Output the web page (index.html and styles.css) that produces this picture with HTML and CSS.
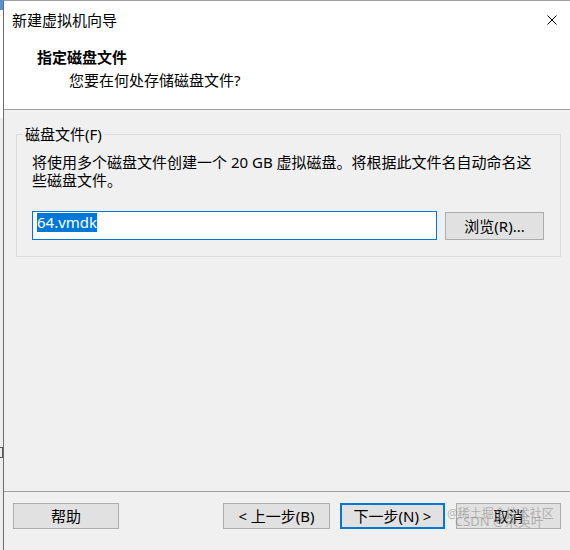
FILE: index.html
```html
<!DOCTYPE html>
<html lang="zh-CN">
<head>
<meta charset="utf-8">
<title>新建虚拟机向导</title>
<link rel="stylesheet" href="styles.css">
</head>
<body>
<div class="screen">
  <div class="strip">
    <div class="strip-blue"></div>
    <div class="strip-white"></div>
    <div class="strip-gray"><div class="strip-box"></div></div>
  </div>
  <div class="window">
    <header class="header">
      <div class="titlebar">
        <span class="title">新建虚拟机向导</span>
        <svg class="close" width="10" height="10" viewBox="0 0 10 10" aria-label="关闭">
          <path d="M0.5 0.5 L9.5 9.5 M9.5 0.5 L0.5 9.5" stroke="#000" stroke-width="1" fill="none"/>
        </svg>
      </div>
      <div class="heading">指定磁盘文件</div>
      <div class="sub">您要在何处存储磁盘文件?</div>
    </header>
    <main class="content">
      <fieldset class="group">
        <legend class="legend">磁盘文件(F)</legend>
        <div class="group-body">
          <p class="desc">将使用多个磁盘文件创建一个 20 GB 虚拟磁盘。将根据此文件名自动命名这<br>些磁盘文件。</p>
          <div class="row">
            <div class="field"><span class="selected">64.vmdk</span></div>
            <button class="btn browse">浏览(R)...</button>
          </div>
        </div>
      </fieldset>
    </main>
    <footer class="footer">
      <button class="btn help">帮助</button>
      <button class="btn back">&lt; 上一步(B)</button>
      <button class="btn next">下一步(N) &gt;</button>
      <button class="btn cancel">取消</button>
      <span class="wm wm1">@稀土掘金技术社区</span>
      <span class="wm wm2">CSDN @朱英叶</span>
    </footer>
  </div>
</div>
</body>
</html>
```

FILE: styles.css
```css
html, body {
  margin: 0;
  padding: 0;
}
body {
  width: 570px;
  height: 550px;
  overflow: hidden;
  background: #f0f0f0;
  font-family: "Noto Sans", "Noto Sans CJK SC", sans-serif;
  font-size: 15px;
  color: #000;
}
.screen {
  display: flex;
  height: 550px;
}
.strip {
  width: 3px;
  display: flex;
  flex-direction: column;
}
.strip-blue {
  height: 10px;
  background: #5b8fd0;
}
.strip-white {
  height: 108px;
  background: #ffffff;
}
.strip-gray {
  flex: 1;
  background: #ececec;
  padding-top: 329px;
}
.strip-box {
  height: 9px;
  width: 2px;
  border: 1px solid #555;
  border-left: none;
}
.window {
  flex: 1;
  display: flex;
  flex-direction: column;
  border-left: 1px solid #6d6d6d;
  border-top: 1px solid #a0a0a0;
  background: #f0f0f0;
  min-width: 0;
}
.header {
  background: #fff;
  height: 108px;
  border-bottom: 1px solid #a0a0a0;
}
.titlebar {
  height: 37px;
  display: flex;
  align-items: center;
  justify-content: space-between;
  padding: 0 13px 0 8px;
}
.title {
  line-height: 20px;
}
.close {
  display: block;
}
.heading {
  margin: 8px 0 0 33px;
  font-weight: 700;
  line-height: 22px;
}
.sub {
  margin: 1px 0 0 65px;
  line-height: 22px;
}
.content {
  flex: 1;
  padding: 14px 9px 0 12px;
}
.group {
  margin: 0;
  border: 1px solid #dcdcdc;
  padding: 0 0 0 6px;
  min-width: 0;
}
.legend {
  padding: 0 2px;
  line-height: 20px;
}
.group-body {
  padding: 9px 16px 16px 9px;
}
.desc {
  margin: 0;
  line-height: 18px;
}
.row {
  display: flex;
  align-items: flex-start;
  gap: 8px;
  margin-top: 22px;
}
.field {
  flex: 1;
  height: 29px;
  box-sizing: border-box;
  border: 1px solid #0078d7;
  background: #fff;
  padding: 0 0 0 4px;
}
.selected {
  display: inline-block;
  background: #0078d7;
  color: #fff;
  line-height: 19px;
}
.btn {
  height: 26px;
  box-sizing: border-box;
  border: 1px solid #adadad;
  background: #e1e1e1;
  font: inherit;
  color: #000;
  padding: 0;
  line-height: 20px;
}
.browse {
  width: 99px;
  height: 28px;
  margin-top: 1px;
}
.footer {
  position: relative;
  height: 47px;
  border-top: 1px solid #a0a0a0;
  display: flex;
  align-items: flex-start;
  padding: 11px 9px 0 9px;
}
.help {
  width: 106px;
}
.back {
  width: 107px;
  margin-left: auto;
}
.next {
  width: 105px;
  margin-left: 10px;
  border: 2px solid #0078d7;
}
.cancel {
  width: 105px;
  margin-left: 11px;
}
.wm {
  position: absolute;
  font-size: 12px;
  line-height: 14px;
  color: rgba(130, 130, 130, 0.55);
  white-space: nowrap;
  pointer-events: none;
}
.wm1 {
  left: 443px;
  top: 15px;
}
.wm2 {
  left: 451px;
  top: 22px;
  font-size: 13px;
}
```
